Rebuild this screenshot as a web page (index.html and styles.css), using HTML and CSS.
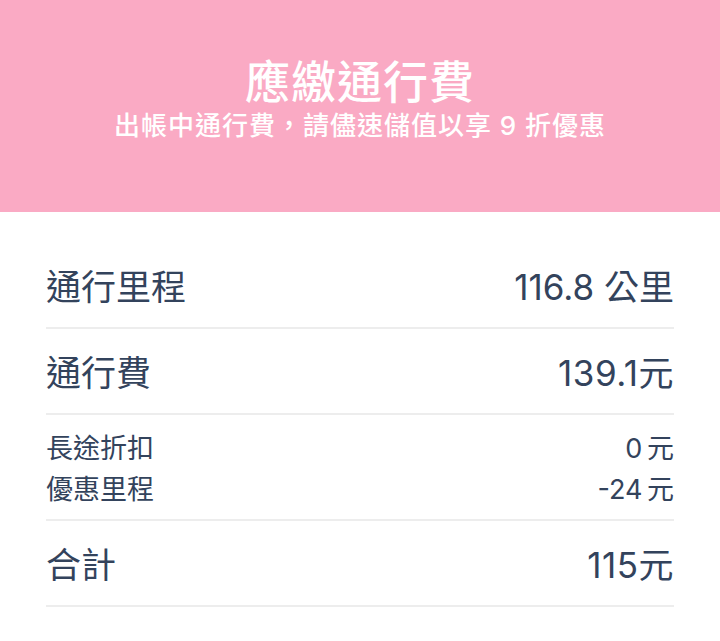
FILE: index.html
```html
<!DOCTYPE html>
<html lang="zh-Hant">
<head>
<meta charset="utf-8">
<title>應繳通行費</title>
<link rel="stylesheet" href="styles.css">
</head>
<body>
<header class="banner">
  <h1 class="banner-title">應繳通行費</h1>
  <p class="banner-sub">出帳中通行費，請儘速儲值以享 9 折優惠</p>
</header>
<main class="details">
  <div class="row">
    <span class="label">通行里程</span>
    <span class="value">116.8 公里</span>
  </div>
  <div class="row">
    <span class="label">通行費</span>
    <span class="value value-tight">139.1元</span>
  </div>
  <div class="row row-small">
    <div class="col">
      <span class="label-sm">長途折扣</span>
      <span class="label-sm">優惠里程</span>
    </div>
    <div class="col col-right">
      <span class="label-sm value-sm">0 元</span>
      <span class="label-sm value-sm">-24 元</span>
    </div>
  </div>
  <div class="row">
    <span class="label">合計</span>
    <span class="value value-tight">115元</span>
  </div>
</main>
</body>
</html>
```
FILE: styles.css
```css
* { box-sizing: border-box; }
html, body { margin: 0; padding: 0; background: #ffffff; }
body {
  font-family: "Inter", "Noto Sans CJK TC", sans-serif;
  color: #33435c;
}
.banner {
  height: 212px;
  background: #faaac4;
  padding-top: 58px;
  display: flex;
  flex-direction: column;
  align-items: center;
  color: #ffffff;
}
.banner-title {
  margin: 0;
  font-size: 45px;
  line-height: 50px;
  font-weight: 500;
  letter-spacing: 1px;
}
.banner-sub {
  margin: 0;
  font-size: 26px;
  line-height: 36px;
  font-weight: 500;
  letter-spacing: 1px;
}
.details {
  padding: 31px 46px 0;
}
.row {
  display: flex;
  justify-content: space-between;
  align-items: center;
  height: 86px;
  padding-top: 4px;
  border-bottom: 2px solid #ededed;
}
.row-small {
  height: 106px;
  align-items: stretch;
}
.col {
  display: flex;
  flex-direction: column;
  justify-content: center;
}
.col-right { align-items: flex-end; }
.label, .value {
  font-size: 35px;
  line-height: 40px;
}
.value-tight { letter-spacing: 0.5px; }
.label-sm {
  font-size: 27px;
  line-height: 41px;
}
.value-sm { word-spacing: -3px; }
```
